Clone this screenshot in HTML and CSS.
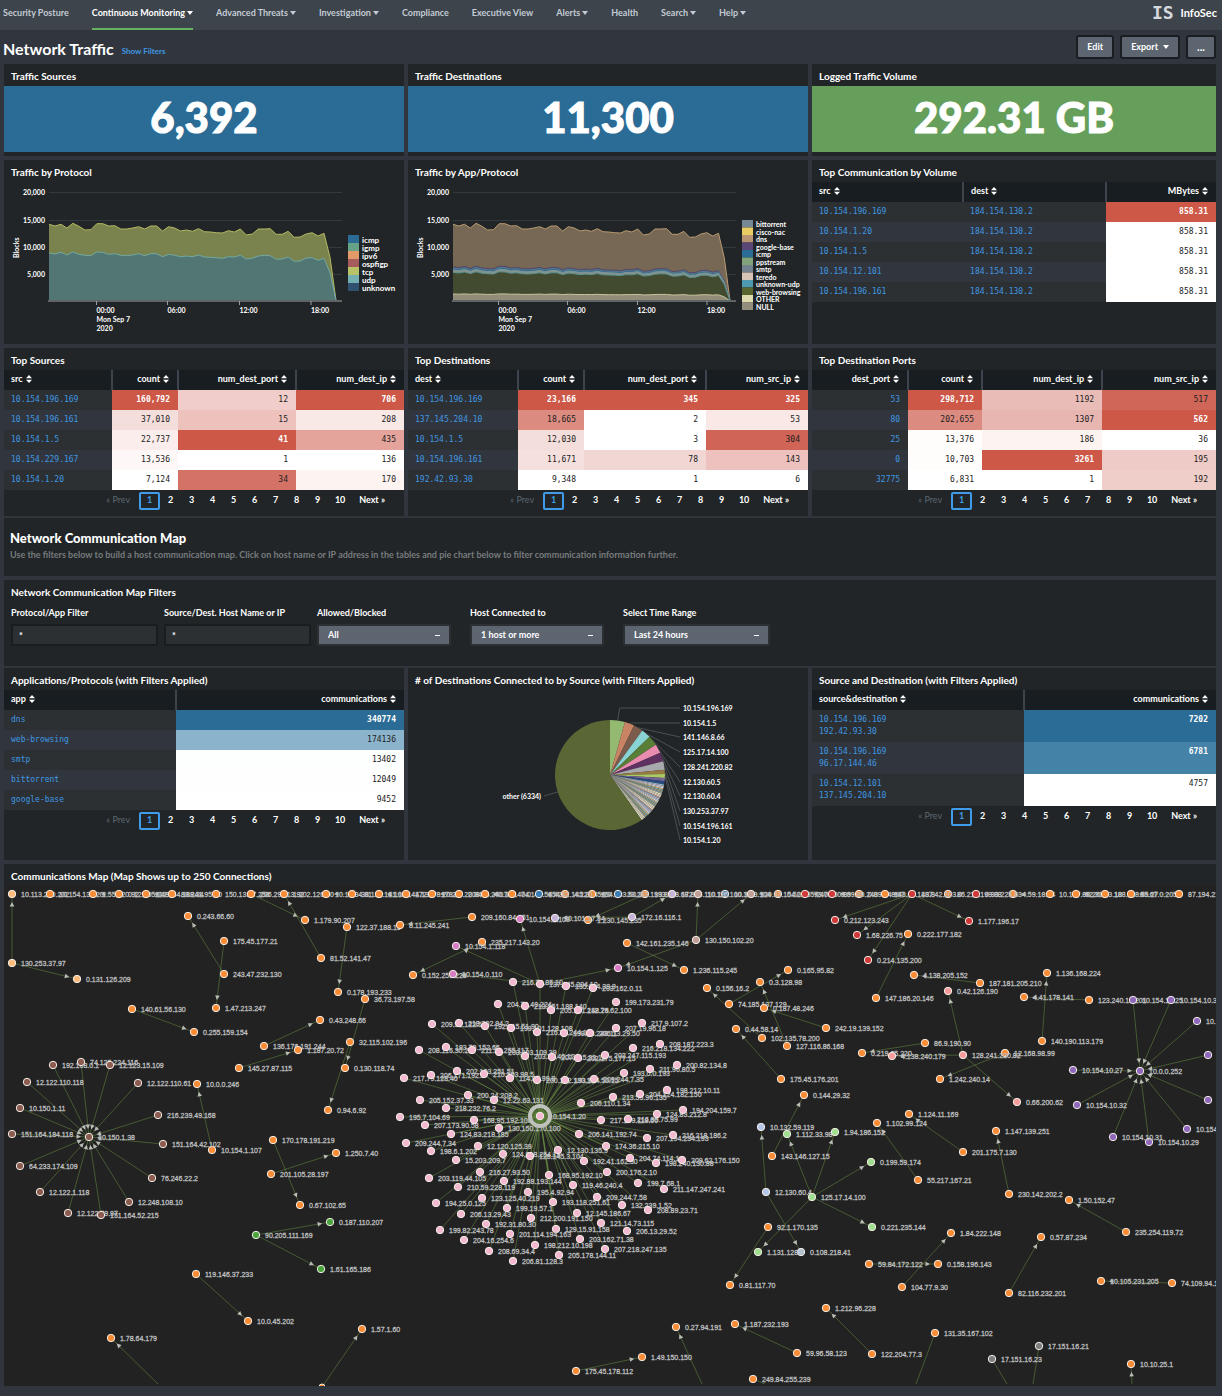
FILE: index.html
```html
<!DOCTYPE html>
<html lang="en">
<head>
<meta charset="utf-8">
<title>Network Traffic | InfoSec</title>
<link rel="stylesheet" href="styles.css">
</head>
<body>
<svg class="defs" width="0" height="0" aria-hidden="true">
  <symbol id="sort" viewBox="0 0 6 8"><path d="M0 3.2 3 0l3 3.2zM0 4.8h6L3 8z" fill="currentColor"/></symbol>
</svg>

<header class="topbar">
  <nav class="menu" aria-label="Main">
    <a href="#">Security Posture</a>
    <a href="#" class="active">Continuous Monitoring<i class="caret"></i></a>
    <a href="#">Advanced Threats<i class="caret"></i></a>
    <a href="#">Investigation<i class="caret"></i></a>
    <a href="#">Compliance</a>
    <a href="#">Executive View</a>
    <a href="#">Alerts<i class="caret"></i></a>
    <a href="#">Health</a>
    <a href="#">Search<i class="caret"></i></a>
    <a href="#">Help<i class="caret"></i></a>
  </nav>
  <div class="brand"><span class="logo">IS</span><span>InfoSec</span></div>
</header>

<main class="dashboard">
  <div class="page-head">
    <h1>Network Traffic</h1>
    <a href="#" class="show-filters">Show Filters</a>
    <div class="actions">
      <button type="button">Edit</button>
      <button type="button">Export<i class="caret"></i></button>
      <button type="button" class="more" aria-label="More actions">...</button>
    </div>
  </div>

  <div class="row">
    <section class="panel"><h2>Traffic Sources</h2><div class="single blue">6,392</div></section>
    <section class="panel"><h2>Traffic Destinations</h2><div class="single blue">11,300</div></section>
    <section class="panel"><h2>Logged Traffic Volume</h2><div class="single green">292.31 GB</div></section>
  </div>

  <div class="row charts">
    <section class="panel"><h2>Traffic by Protocol</h2><svg id="by-protocol" class="chart" viewBox="0 0 400 160"></svg></section>
    <section class="panel"><h2>Traffic by App/Protocol</h2><svg id="by-app" class="chart" viewBox="0 0 400 160"></svg></section>
    <section class="panel"><h2>Top Communication by Volume</h2>
      <table>
        <colgroup><col style="width:37.4%"><col style="width:35.4%"><col></colgroup>
        <thead><tr><th><button type="button">src<svg><use href="#sort"/></svg></button></th><th><button type="button">dest<svg><use href="#sort"/></svg></button></th><th class="num"><button type="button">MBytes<svg><use href="#sort"/></svg></button></th></tr></thead>
        <tbody>
          <tr><td><a href="#">10.154.196.169</a></td><td><a href="#">184.154.130.2</a></td><td class="num max" style="background:#cd5848">858.31</td></tr>
          <tr><td><a href="#">10.154.1.20</a></td><td><a href="#">184.154.130.2</a></td><td class="num" style="background:#fff">858.31</td></tr>
          <tr><td><a href="#">10.154.1.5</a></td><td><a href="#">184.154.130.2</a></td><td class="num" style="background:#fff">858.31</td></tr>
          <tr><td><a href="#">10.154.12.101</a></td><td><a href="#">184.154.130.2</a></td><td class="num" style="background:#fff">858.31</td></tr>
          <tr><td><a href="#">10.154.196.161</a></td><td><a href="#">184.154.130.2</a></td><td class="num" style="background:#fff">858.31</td></tr>
        </tbody>
      </table>
    </section>
  </div>

  <div class="row tops">
    <section class="panel"><h2>Top Sources</h2>
      <table>
        <colgroup><col style="width:27%"><col style="width:16.5%"><col style="width:29.5%"><col></colgroup>
        <thead><tr><th><button type="button">src<svg><use href="#sort"/></svg></button></th><th class="num"><button type="button">count<svg><use href="#sort"/></svg></button></th><th class="num"><button type="button">num_dest_port<svg><use href="#sort"/></svg></button></th><th class="num"><button type="button">num_dest_ip<svg><use href="#sort"/></svg></button></th></tr></thead>
        <tbody>
          <tr><td><a href="#">10.154.196.169</a></td><td class="num max" style="background:#cd5848">160,792</td><td class="num" style="background:#f0cdca">12</td><td class="num max" style="background:#cd5848">706</td></tr>
          <tr><td><a href="#">10.154.196.161</a></td><td class="num" style="background:#f4dedb">37,010</td><td class="num" style="background:#edc2bd">15</td><td class="num" style="background:#f8e8e6">208</td></tr>
          <tr><td><a href="#">10.154.1.5</a></td><td class="num" style="background:#faedeb">22,737</td><td class="num max" style="background:#cd5848">41</td><td class="num" style="background:#e4a49c">435</td></tr>
          <tr><td><a href="#">10.154.229.167</a></td><td class="num" style="background:#fdf7f7">13,536</td><td class="num" style="background:#fff">1</td><td class="num" style="background:#fff">136</td></tr>
          <tr><td><a href="#">10.154.1.20</a></td><td class="num" style="background:#fff">7,124</td><td class="num" style="background:#d47266">34</td><td class="num" style="background:#fdf3f1">170</td></tr>
        </tbody>
      </table>
      <nav class="pager" aria-label="Top Sources pages"><span class="off">« Prev</span><a href="#" class="cur">1</a><a href="#">2</a><a href="#">3</a><a href="#">4</a><a href="#">5</a><a href="#">6</a><a href="#">7</a><a href="#">8</a><a href="#">9</a><a href="#" class="two">10</a><a href="#" class="next">Next »</a></nav>
    </section>
    <section class="panel"><h2>Top Destinations</h2>
      <table>
        <colgroup><col style="width:27.5%"><col style="width:16.5%"><col style="width:30.5%"><col></colgroup>
        <thead><tr><th><button type="button">dest<svg><use href="#sort"/></svg></button></th><th class="num"><button type="button">count<svg><use href="#sort"/></svg></button></th><th class="num"><button type="button">num_dest_port<svg><use href="#sort"/></svg></button></th><th class="num"><button type="button">num_src_ip<svg><use href="#sort"/></svg></button></th></tr></thead>
        <tbody>
          <tr><td><a href="#">10.154.196.169</a></td><td class="num max" style="background:#cd5848">23,166</td><td class="num max" style="background:#cd5848">345</td><td class="num max" style="background:#cd5848">325</td></tr>
          <tr><td><a href="#">137.145.204.10</a></td><td class="num" style="background:#dc8b81">18,665</td><td class="num" style="background:#fff">2</td><td class="num" style="background:#f9e8e6">53</td></tr>
          <tr><td><a href="#">10.154.1.5</a></td><td class="num" style="background:#f4dedb">12,030</td><td class="num" style="background:#fff">3</td><td class="num" style="background:#d06456">304</td></tr>
          <tr><td><a href="#">10.154.196.161</a></td><td class="num" style="background:#f5e0de">11,671</td><td class="num" style="background:#f2d6d3">78</td><td class="num" style="background:#edc2be">143</td></tr>
          <tr><td><a href="#">192.42.93.30</a></td><td class="num" style="background:#fff">9,348</td><td class="num" style="background:#fff">1</td><td class="num" style="background:#fff">6</td></tr>
        </tbody>
      </table>
      <nav class="pager" aria-label="Top Destinations pages"><span class="off">« Prev</span><a href="#" class="cur">1</a><a href="#">2</a><a href="#">3</a><a href="#">4</a><a href="#">5</a><a href="#">6</a><a href="#">7</a><a href="#">8</a><a href="#">9</a><a href="#" class="two">10</a><a href="#" class="next">Next »</a></nav>
    </section>
    <section class="panel"><h2>Top Destination Ports</h2>
      <table>
        <colgroup><col style="width:23.8%"><col style="width:18.3%"><col style="width:29.7%"><col></colgroup>
        <thead><tr><th class="num"><button type="button">dest_port<svg><use href="#sort"/></svg></button></th><th class="num"><button type="button">count<svg><use href="#sort"/></svg></button></th><th class="num"><button type="button">num_dest_ip<svg><use href="#sort"/></svg></button></th><th class="num"><button type="button">num_src_ip<svg><use href="#sort"/></svg></button></th></tr></thead>
        <tbody>
          <tr><td class="num"><a href="#">53</a></td><td class="num max" style="background:#cd5848">298,712</td><td class="num" style="background:#e9bcb8">1192</td><td class="num" style="background:#d06658">517</td></tr>
          <tr><td class="num"><a href="#">80</a></td><td class="num" style="background:#dc8b81">202,655</td><td class="num" style="background:#e8b6b1">1307</td><td class="num max" style="background:#cd5848">562</td></tr>
          <tr><td class="num"><a href="#">25</a></td><td class="num" style="background:#fffcfc">13,376</td><td class="num" style="background:#fdf3f1">186</td><td class="num" style="background:#fff">36</td></tr>
          <tr><td class="num"><a href="#">0</a></td><td class="num" style="background:#fffdfc">10,703</td><td class="num max" style="background:#cd5848">3261</td><td class="num" style="background:#eecbc7">195</td></tr>
          <tr><td class="num"><a href="#">32775</a></td><td class="num" style="background:#fff">6,831</td><td class="num" style="background:#fff">1</td><td class="num" style="background:#efcdc9">192</td></tr>
        </tbody>
      </table>
      <nav class="pager" aria-label="Top Destination Ports pages"><span class="off">« Prev</span><a href="#" class="cur">1</a><a href="#">2</a><a href="#">3</a><a href="#">4</a><a href="#">5</a><a href="#">6</a><a href="#">7</a><a href="#">8</a><a href="#">9</a><a href="#" class="two">10</a><a href="#" class="next">Next »</a></nav>
    </section>
  </div>

  <section class="panel intro">
    <h2>Network Communication Map</h2>
    <p>Use the filters below to build a host communication map. Click on host name or IP address in the tables and pie chart below to filter communication information further.</p>
  </section>

  <section class="panel filters">
    <h2>Network Communication Map Filters</h2>
    <form class="fields">
      <div class="field"><label for="f-app">Protocol/App Filter</label><input id="f-app" type="text" value="*"></div>
      <div class="field"><label for="f-host">Source/Dest. Host Name or IP</label><input id="f-host" type="text" value="*"></div>
      <div class="field"><label for="f-act">Allowed/Blocked</label><select id="f-act"><option>All</option></select></div>
      <div class="field"><label for="f-cnt">Host Connected to</label><select id="f-cnt"><option>1 host or more</option></select></div>
      <div class="field wide"><label for="f-time">Select Time Range</label><select id="f-time"><option>Last 24 hours</option></select></div>
    </form>
  </section>

  <div class="row details">
    <section class="panel"><h2>Applications/Protocols (with Filters Applied)</h2>
      <table>
        <colgroup><col style="width:43%"><col></colgroup>
        <thead><tr><th><button type="button">app<svg><use href="#sort"/></svg></button></th><th class="num"><button type="button">communications<svg><use href="#sort"/></svg></button></th></tr></thead>
        <tbody>
          <tr><td><a href="#">dns</a></td><td class="num max" style="background:#2b6c97">340774</td></tr>
          <tr><td><a href="#">web-browsing</a></td><td class="num" style="background:#8bb3cc">174136</td></tr>
          <tr><td><a href="#">smtp</a></td><td class="num" style="background:#fdfefe">13402</td></tr>
          <tr><td><a href="#">bittorrent</a></td><td class="num" style="background:#fefefe">12049</td></tr>
          <tr><td><a href="#">google-base</a></td><td class="num" style="background:#fff">9452</td></tr>
        </tbody>
      </table>
      <nav class="pager" aria-label="Applications pages"><span class="off">« Prev</span><a href="#" class="cur">1</a><a href="#">2</a><a href="#">3</a><a href="#">4</a><a href="#">5</a><a href="#">6</a><a href="#">7</a><a href="#">8</a><a href="#">9</a><a href="#" class="two">10</a><a href="#" class="next">Next »</a></nav>
    </section>
    <section class="panel"><h2># of Destinations Connected to by Source (with Filters Applied)</h2><svg id="by-source" class="chart" viewBox="0 0 400 168"></svg></section>
    <section class="panel"><h2>Source and Destination (with Filters Applied)</h2>
      <table>
        <colgroup><col style="width:52.5%"><col></colgroup>
        <thead><tr><th><button type="button">source&amp;destination<svg><use href="#sort"/></svg></button></th><th class="num"><button type="button">communications<svg><use href="#sort"/></svg></button></th></tr></thead>
        <tbody class="pairs">
          <tr><td><a href="#">10.154.196.169<br>192.42.93.30</a></td><td class="num max" style="background:#2b6c97">7202</td></tr>
          <tr><td><a href="#">10.154.196.169<br>96.17.144.46</a></td><td class="num max" style="background:#4482a8">6781</td></tr>
          <tr><td><a href="#">10.154.12.101<br>137.145.204.10</a></td><td class="num" style="background:#fff">4757</td></tr>
        </tbody>
      </table>
      <nav class="pager" aria-label="Source and Destination pages"><span class="off">« Prev</span><a href="#" class="cur">1</a><a href="#">2</a><a href="#">3</a><a href="#">4</a><a href="#">5</a><a href="#">6</a><a href="#">7</a><a href="#">8</a><a href="#">9</a><a href="#" class="two">10</a><a href="#" class="next">Next »</a></nav>
    </section>
  </div>

  <section class="panel"><h2>Communications Map (Map Shows up to 250 Connections)</h2>
    <svg id="map" class="map" viewBox="4 886 1212 500"></svg>
  </section>
</main>
<script src="app.js"></script>
</body>
</html>
```
FILE: styles.css
```css
* { box-sizing: border-box; }
body {
  margin: 0;
  background: #31363e;
  color: #fff;
  font: 10px/12px Lato, "Liberation Sans", sans-serif;
}
a { color: #3f97e2; text-decoration: none; }
h1, h2, p { margin: 0; }
button { font: inherit; color: inherit; }
.defs { position: absolute; }

.caret {
  display: inline-block;
  margin-left: 2px;
  border: 3px solid transparent;
  border-top: 4px solid currentColor;
  border-bottom: 0;
  vertical-align: 1px;
}

/* Top bar */
.topbar {
  display: flex;
  justify-content: space-between;
  height: 30px;
  padding: 0 5px 0 3px;
  background: #3d444c;
}
.menu { display: flex; gap: 23px; font-size: 9px; font-weight: 700; }
.menu a { padding-top: 7px; color: #c3cbd4; border-bottom: 2px solid transparent; white-space: nowrap; }
.menu .active { color: #fff; border-color: #65b35f; }
.brand { display: flex; gap: 7px; height: 26px; align-items: center; font-size: 11px; font-weight: 700; }
.logo { font: 700 18px/18px "DejaVu Sans Mono", monospace; color: #d5d9dd; }

/* Dashboard frame */
.dashboard { padding: 0 6px 10px 4px; }
.page-head { display: flex; align-items: center; gap: 8px; height: 34px; }
.page-head h1 { margin-left: -1px; font-size: 16px; line-height: 20px; padding-top: 3px; }
.show-filters { font-size: 8px; font-weight: 700; padding-top: 8px; }
.actions { display: flex; gap: 6px; margin-left: auto; }
.actions button {
  height: 24px;
  padding: 0 9px;
  border: 2px solid #1a1e22;
  border-radius: 3px;
  background: #5c6570;
  font-size: 9px;
  font-weight: 700;
}
.actions .more { width: 30px; font-size: 11px; }
.actions .caret { margin-left: 5px; }
.row { display: grid; grid-template-columns: minmax(0, 100fr) minmax(0, 100fr) minmax(0, 101fr); gap: 4px; margin-bottom: 4px; }
.panel { background: #212527; }
.panel h2 { height: 22px; padding: 6px 7px 0; font-size: 10px; line-height: 13px; font-weight: 700; white-space: nowrap; }
.tops { margin-bottom: 2px; }
.charts { min-height: 184px; }
.details { min-height: 192px; }
.chart, .map { display: block; width: 100%; height: auto; }

.single {
  height: 66px;
  margin-bottom: 4px;
  font-size: 42px;
  line-height: 62px;
  font-weight: 900;
  text-align: center;
  -webkit-text-stroke: 1px #fff;
}
.blue { background: #2b6c97; }
.green { background: #669f5c; }

/* Tables */
table { width: 100%; table-layout: fixed; border-collapse: collapse; }
th { height: 20px; padding: 0 7px 3px; background: #171d21; text-align: left; }
th + th { border-left: 2px solid #3c444d; }
th button { padding: 0; border: 0; background: none; font-size: 9px; font-weight: 700; }
th svg { width: 6px; height: 8px; margin-left: 3px; vertical-align: -1px; }
td { height: 20px; padding: 0 7px 1px; font: 8px/12px "DejaVu Sans Mono", monospace; }
tbody tr:nth-child(odd) { background: #2c3033; }
tbody tr:nth-child(even) { background: #31363e; }
.num { padding-right: 8px; text-align: right; }
td.num { color: #222; }
td.max { color: #fff; font-weight: 700; }
.pairs td { height: 32px; padding-top: 4px; padding-bottom: 4px; vertical-align: top; }

.pager { display: flex; justify-content: flex-end; height: 26px; padding: 2px 17px 0 0; font-size: 9px; font-weight: 700; line-height: 11px; }
.pager a { width: 21px; height: 18px; border: 2px solid transparent; color: #fff; text-align: center; }
.pager .cur { border-color: #409be8; border-radius: 2px; color: #409be8; }
.pager .two { width: 24px; }
.pager .next { width: auto; margin-left: 5px; }
.pager .off { margin-right: 9px; padding-top: 2px; color: #5c6570; font-weight: 400; }

/* Map introduction and filters */
.intro { height: 58px; margin-bottom: 4px; padding: 12px 6px 0; }
.intro h2 { height: 19px; padding: 0; font-size: 13px; line-height: 16px; font-weight: 900; }
.intro p { color: #777b7e; font-size: 9px; font-weight: 700; }
.filters { height: 86px; margin-bottom: 2px; }
.fields { display: flex; flex-wrap: wrap; gap: 6px; padding: 5px 7px; }
.field { width: 147px; font-weight: 700; font-size: 9px; }
.field label { display: block; height: 17px; white-space: nowrap; }
.field input, .field select { height: 22px; border: 2px solid #1a1d20; border-radius: 2px; color: #fff; font: 700 9px/12px Lato, sans-serif; }
.field input { width: 100%; padding: 0 6px; background: #2c3033; }
.field select {
  width: 134px;
  padding: 0 9px;
  appearance: none;
  border-color: #2c3033;
  background: linear-gradient(#fff, #fff) right 9px center / 5px 1px no-repeat #5c6570;
}
.field.wide select { width: 100%; }

/* SVG drawings */
.chart text { fill: #fff; font-size: 7px; font-weight: 700; }
.chart .legend-lg { font-size: 8px; }
.chart .grid { stroke: #303a3f; }
.chart .axis { stroke: #5f6467; stroke-width: 2; }
.chart .tick { stroke: #9a9ea2; }
.chart .leader { fill: none; stroke: #4c5053; }
.map { background: #222; }
.map line { stroke: #6a9244; stroke-opacity: .5; }
.map .arrow { fill: #b9bdb5; }
.map circle { stroke: #f4eee8; }
.map .halo { fill: none; stroke: #bfc3bb; stroke-width: 4; }
.map text { fill: #bcbebf; font: 7px "Liberation Sans", sans-serif; stroke: #bcbebf; stroke-width: .3; }
```
FILE: app.js
```js
const NS = 'http://www.w3.org/2000/svg';
function add(parent, name, attrs, text) {
  const el = document.createElementNS(NS, name);
  for (const key in attrs) el.setAttribute(key, attrs[key]);
  if (text !== undefined) el.textContent = text;
  parent.appendChild(el);
  return el;
}

/* ---- Area charts: values are heights above the baseline, in thirds of a unit ---- */
const total = [205,210,205,216,202,211,222,221,203,203,210,209,219,219,216,212,219,210,210,225,212,216,225,222,226,218,227,228,230,231,224,228,219,237,234,219,219,218,235,235,226,244,243,234,230,240,232,304,433].map(v => (435 - v) / 3);
const udp = [291,294,289,297,288,295,298,299,288,289,295,293,298,299,297,293,299,293,293,302,295,298,302,300,302,297,303,304,305,307,302,303,298,309,307,300,298,299,310,309,303,316,315,306,305,313,307,350,433].map(v => (435 - v) / 3);
const BASE = 119;

function areaChart(id, right, plotRight, layers, ticks, legend) {
  const svg = document.getElementById(id);
  [['20,000', 10], ['15,000', 38], ['10,000', 65], ['5,000', 92]].forEach(([label, y]) => {
    add(svg, 'line', { class: 'grid', x1: 45, x2: plotRight, y1: y + .5, y2: y + .5 });
    add(svg, 'text', { x: 41, y: y + 3, 'text-anchor': 'end' }, label);
  });
  layers.forEach(([values, fill, line, ratio]) => {
    const pts = values.map((v, i) => (45 + i * (right - 45) / 48).toFixed(1) + ',' + (BASE - v * ratio).toFixed(1));
    add(svg, 'polygon', { points: `45,${BASE} ${pts.join(' ')} ${right},${BASE}`, fill });
    add(svg, 'polyline', { points: pts.join(' '), fill: 'none', stroke: line });
  });
  add(svg, 'line', { class: 'axis', x1: 44, x2: plotRight, y1: BASE, y2: BASE });
  ticks.forEach(([label, x]) => {
    add(svg, 'line', { class: 'tick', x1: x, x2: x, y1: BASE, y2: BASE + 4 });
    add(svg, 'text', { x: x, y: 131 }, label);
  });
  add(svg, 'text', { x: ticks[0][1], y: 140 }, 'Mon Sep 7');
  add(svg, 'text', { x: ticks[0][1], y: 149 }, '2020');
  add(svg, 'text', { transform: 'translate(15 76) rotate(-90)' }, 'Blocks');
  legend.items.forEach(([name, color], i) => {
    const y = legend.y + i * legend.step;
    add(svg, 'rect', { x: legend.x, y, width: 11, height: legend.step, fill: color });
    add(svg, 'text', { x: legend.x + 14, y: y + legend.base, class: legend.cls }, name);
  });
}

areaChart('by-protocol', 332, 338, [
  [total, '#7a824d', '#b5b963', 1],
  [udp, '#527674', '#71a9a2', 1],
  [udp, '#38526a', '#38526a', .01]
], [['00:00', 92.5], ['06:00', 163.5], ['12:00', 235.5], ['18:00', 307]], {
  x: 344, y: 53, step: 8, base: 8, cls: 'legend-lg',
  items: [['icmp', '#2b6c97'], ['igmp', '#65a288'], ['ipv6', '#e19a68'], ['ospfigp', '#a65c5c'], ['tcp', '#b8c267'], ['udp', '#74b0b1'], ['unknown', '#30506f']]
});

areaChart('by-app', 322, 328, [
  [total, '#776856', '#b99b70', 1],
  [udp, '#4b4767', '#554a6b', .71],
  [udp, '#316c91', '#5a7a90', .685],
  [udp, '#87938c', '#7d9796', .645],
  [udp, '#424b30', '#59908f', .595],
  [udp, '#918c78', '#c9c39c', .145]
], [['00:00', 90.5], ['06:00', 159.5], ['12:00', 229.5], ['18:00', 299]], {
  x: 334, y: 38, step: 7.5, base: 7, cls: 'legend-sm',
  items: [['bittorrent', '#768894'], ['cisco-nac', '#eacc62'], ['dns', '#b89674'], ['google-base', '#5b4775'], ['icmp', '#2b6c97'], ['ppstream', '#82a37a'], ['smtp', '#73838e'], ['teredo', '#d6c5b7'], ['unknown-udp', '#4e99b0'], ['web-browsing', '#59662f'], ['OTHER', '#dfdbb0'], ['NULL', '#938e7d']]
});

/* ---- Pie chart ---- */
(function pie() {
  const svg = document.getElementById('by-source');
  const cx = 202, cy = 85, r = 55;
  const at = deg => [cx + r * Math.sin(deg * Math.PI / 180), cy - r * Math.cos(deg * Math.PI / 180)];
  const slices = [[15.8, '#94ba72'], [26, '#c98365'], [36, '#7b5b4c'], [46, '#8ad3d5'], [56.5, '#587e37'], [66, '#ea8caf'], [75.5, '#5f3160'], [84.5, '#a8a9ad'], [89, '#977a43'], [93, '#acc963'], [96.5, '#76639a'], [100, '#2a4c80']];
  const thin = ['#8fb7c9', '#d9c8b4', '#9a9d78', '#c9d6da', '#b78c86', '#e1ddb6', '#7da7a8', '#c3b3c8', '#dfe3d2', '#8e9aa3', '#d4ad7c'];
  for (let i = 0; i < 32; i++) slices.push([100 + (i + 1) * 1.4, thin[i * 7 % 11]]);
  slices.push([360, '#5a6735']);
  let from = 0;
  slices.forEach(([to, fill]) => {
    const a = at(from), b = at(to);
    add(svg, 'path', { d: `M${cx} ${cy}L${a}A${r} ${r} 0 ${to - from > 180 ? 1 : 0} 1 ${b}Z`, fill });
    from = to;
  });
  const names = ['10.154.196.169', '10.154.1.5', '141.146.8.66', '125.17.14.100', '128.241.220.82', '12.130.60.5', '12.130.60.4', '130.253.37.97', '10.154.196.161', '10.154.1.20'];
  const mids = [8, 21, 31, 41, 51, 61, 71, 80, 87, 91];
  names.forEach((name, i) => {
    const y = Math.round(18 + i * 14.7), p = at(mids[i]);
    const knee = i < 2 ? `${p[0] + 2},${y} ` : '';
    add(svg, 'polyline', { class: 'leader', points: `${p} ${knee}272,${y}` });
    add(svg, 'text', { x: 275, y: y + 3 }, name);
  });
  add(svg, 'polyline', { class: 'leader', points: `${at(252)} 136,106` });
  add(svg, 'text', { x: 133, y: 109, 'text-anchor': 'end' }, 'other (6334)');
})();

/* ---- Communications map ---- */
const color = { O: '#f98c35', L: '#fdbc7c', B: '#8c5c50', G: '#4aa53c', P: '#f3b9d1', M: '#d77cc4', U: '#3a7db5', u: '#b4c7e6', V: '#9068bb', v: '#c5b4d8', g: '#a0de90', R: '#d0393a', S: '#f79c9c', K: '#7f7f7f', T: '#c19f98' };
/* group: x y label ; ... */
const groups = {
  L: '12 894 10.113.200.202;12 963 130.253.37.97;77 979 0.131.126.209',
  O: '50 894 10.154.130.20;93 894 1.55.220.92;119 894 0.121.95.248;146 894 222.154.188.34;172 894 88.241.95.40;216 894 150.133.7.258;251 894 206.29.113.92;284 894 1.202.126.40;326 894 10.18.34.81;352 894 38.132.141.138;379 894 1.108.144.138;406 894 172.178.20.24;432 894 178.87.20.84;459 894 208.44.240.14;485 894 40.74.140.0;512 894 74.147.54.42;565 894 4.22.145.20;592 894 204.133.50.13;645 894 193.118.68.86;778 894 0.52.155.240;859 894 0.89.248.97;885 894 143.18.143.8;948 894 86.212.199.88;1013 894 4.59.18.34;1050 894 10.147.80.26;1076 894 82.31.43.18;1105 894 188.118.55.27;1131 894 83.67.0.205;1179 894 87.194.216.51;188 916 0.243.66.60;224 941 175.45.177.21;224 974 243.47.232.130;216 1008 1.47.213.247;132 1009 140.61.56.130;194 1032 0.255.159.154;305 920 1.179.90.207;347 927 122.37.188.15;321 958 81.52.141.47;338 992 0.178.193.233;365 999 36.73.197.58;320 1020 0.43.248.66;350 1042 32.115.102.196;264 1046 136.176.191.244;298 1050 1.187.20.72;239 1068 145.27.87.115;345 1068 0.130.118.74;197 1084 10.0.0.246;328 1110 0.94.6.92;212 1150 10.154.1.107;273 1140 170.178.191.219;300 1205 0.67.102.65;271 1174 201.105.28.197;336 1153 1.250.7.40;196 1274 119.146.37.233;248 1321 10.0.45.202;111 1338 1.78.64.179;362 1329 1.57.1.60;472 917 209.160.84.151;400 925 8.11.245.241;588 920 1.230.145.235;482 942 235.217.143.20;413 975 0.152.253.223;627 943 142.161.235.146;684 970 1.236.115.245;707 988 0.156.16.2;762 1038 102.135.78.200;729 1004 74.185.137.129;788 970 0.165.95.82;760 982 0.3.128.98;787 1046 127.116.86.168;764 1008 0.187.48.246;826 1028 242.19.139.152;736 1029 0.44.58.14;781 1079 175.45.176.201;730 1285 0.81.117.70;768 1227 92.1.170.135;676 1327 0.27.94.191;735 1324 1.187.232.193;797 1353 59.96.58.123;576 1371 175.45.178.112;642 1357 1.49.150.150;753 1379 249.84.255.239;772 1156 143.146.127.15;804 1095 0.144.29.32;908 934 0.222.177.182;876 998 147.186.20.146;914 975 4.138.205.152;980 983 187.181.205.210;1024 997 4.41.178.141;1089 1000 123.240.13.201;1047 973 1.136.168.224;1042 1041 140.190.113.179;862 1053 0.219.65.220;925 1043 86.9.190.90;1005 1053 12.168.98.99;940 1079 1.242.240.14;909 1114 1.124.11.169;963 1152 201.175.7.130;877 1123 1.102.99.124;918 1180 55.217.167.21;996 1131 1.147.139.251;1009 1194 230.142.202.2;1069 1200 1.50.152.47;1126 1232 235.254.119.72;951 1233 1.84.222.148;902 1287 104.77.9.30;1041 1237 0.57.87.234;1009 1293 82.116.232.201;869 1264 59.84.172.122;938 1264 0.158.196.143;1101 1281 10.105.231.205;1172 1283 74.109.94.17;826 1308 1.212.96.228;872 1354 122.204.77.3;935 1333 131.35.167.102;1131 1364 10.10.25.1',
  B: '53 1065 192.168.0.1;81 1062 74.125.224.116;110 1065 12.123.15.109;27 1082 12.122.110.118;138 1083 12.122.110.61;20 1108 10.150.1.11;158 1115 216.239.49.168;12 1134 151.164.184.118;163 1144 151.164.42.102;20 1166 64.233.174.109;152 1178 76.246.22.2;40 1192 12.122.1.118;129 1202 12.248.108.10;68 1213 12.122.79.97;101 1215 151.164.52.215;89 1137 10.150.1.38',
  G: '256 1235 90.205.111.169;330 1222 0.187.110.207;321 1269 1.61.165.186',
  M: '520 919 10.154.1.109;456 946 10.154.1.118;453 974 10.154.0.110;618 968 10.154.1.125',
  U: '539 894 154.42.145.20;618 894 33.253.193.8;725 894 10.10.3.104',
  v: '555 918 10.101.17.54;632 917 172.16.116.1;672 894 172.16.110.13',
  T: '698 894 10.116.100.3;751 894 129.33.154.0;696 940 130.150.102.20',
  u: '761 1127 10.132.59.119;766 1192 12.130.60.4;801 1252 0.108.218.41',
  g: '758 1252 1.131.128.5;812 1197 125.17.14.100;787 1134 1.112.33.98;835 1132 1.94.186.152;871 1162 0.199.59.174;872 1227 0.221.235.144',
  R: '805 894 73.70.60.89;832 894 0.69.89.248;912 894 187.42.203.0;976 894 0.93.225.63;835 920 0.212.123.243;857 935 1.68.226.75;868 960 0.214.135.200;969 921 1.177.196.17',
  S: '948 991 0.42.126.190;963 1055 128.241.220.82;892 1056 4.138.240.179;1017 1102 0.66.200.62',
  K: '992 1359 17.151.16.23;1039 1346 17.151.16.21',
  V: '1133 1000 10.154.10.25;1171 1000 10.154.10.30;1197 1021 10.154.10.26;1208 1055 10.154.10.33;1208 1100 10.154.10.34;1187 1129 10.154.10.28;1149 1142 10.154.10.29;1113 1137 10.154.10.31;1077 1105 10.154.10.32;1073 1070 10.154.10.27;1140 1071 10.0.0.252',
  P: '513 982 216.79.85.10;540 984 137.145.204.10;566 986 195.194.39.9;593 988 203.162.0.11;498 1004 204.79.49.224;525 1006 213.151.188.140;551 1010 205.161.148.26;578 1010 212.79.62.100;616 1002 199.173.231.79;432 1024 209.51.122.5;459 1023 218.202.94.2;485 1026 192.215.51.90;511 1028 199.101.128.108;537 1032 216.33.244.11;564 1033 199.18.248.11;590 1033 206.13.29.50;616 1028 207.19.96.18;642 1023 217.9.107.2;419 1050 208.116.30.21;446 1047 193.79.152.66;472 1050 211.50.255.117;499 1052 203.203.109.39;525 1056 203.33.40.12;552 1057 207.215.33.12;578 1058 202.175.177.15;605 1055 202.247.115.193;633 1048 216.218.134.222;660 1044 208.187.223.3;404 1078 217.79.128.40;431 1075 206.171.192.9;457 1071 202.103.251.51;484 1074 210.103.98.5;510 1078 114.87.99.8;537 1080 200.152.130.10;565 1080 193.124.50.15;594 1079 209.244.7.35;624 1073 193.0.0.193;650 1069 211.96.80.5;677 1065 200.82.134.8;420 1100 205.152.37.33;468 1095 200.24.208.2;494 1100 12.22.63.131;581 1103 206.110.1.34;613 1097 213.55.96.135;640 1094 204.124.182.150;667 1090 198.212.10.11;446 1108 218.232.76.2;400 1117 195.7.104.69;425 1125 207.173.90.58;474 1120 168.95.192.106;499 1128 130.150.170.100;451 1134 124.83.218.185;406 1143 209.244.7.34;431 1151 198.6.1.202;478 1146 12.120.125.39;503 1154 124.218.254.18;456 1160 15.203.209.7;530 1156 128.145.3.104;558 1150 12.130.135.9;579 1134 206.141.192.74;601 1120 217.109.118.60;628 1119 216.99.75.99;657 1114 124.83.212.8;683 1110 194.204.159.7;647 1138 207.194.234.193;673 1135 216.218.186.2;606 1146 174.36.215.10;584 1161 192.41.162.30;630 1158 204.74.114.1;656 1163 198.240.130.88;682 1160 209.62.176.150;480 1172 216.27.93.50;429 1178 203.119.44.105;504 1181 192.88.193.144;549 1175 168.95.192.10;607 1172 200.176.2.10;638 1183 199.7.68.1;664 1189 211.147.247.241;573 1185 119.46.240.4;458 1187 210.59.228.119;528 1192 195.4.92.94;482 1198 123.125.40.219;436 1203 194.25.0.125;553 1202 193.118.251.61;597 1197 209.244.7.58;622 1205 132.239.1.52;648 1210 208.89.23.71;507 1208 199.19.57.1;461 1214 206.13.29.43;531 1218 212.200.191.150;577 1213 12.145.186.67;601 1223 121.14.73.115;486 1224 192.31.80.30;440 1230 199.82.243.78;556 1229 129.15.91.158;627 1231 206.13.29.52;510 1234 201.114.194.163;580 1239 203.162.71.38;464 1240 204.16.254.6;535 1245 198.212.10.198;605 1249 207.218.247.135;489 1251 208.69.34.4;559 1255 205.178.144.11;513 1261 206.81.128.3;540 1116 10.154.1.20'
};
/* directed connections: x1 y1 x2 y2 */
const links = '12 963 12 894;12 963 77 979;224 974 188 916;224 941 216 1008;132 1009 194 1032;251 894 305 920;321 958 284 894;347 927 338 992;365 999 345 1068;350 1042 328 1110;264 1046 320 1020;239 1068 298 1050;212 1150 197 1084;273 1140 300 1205;271 1174 336 1153;256 1235 330 1222;256 1235 321 1269;196 1274 248 1321;158 1384 111 1338;322 1387 362 1329;472 917 400 925;632 917 672 894;632 917 555 918;645 894 588 920;482 942 413 975;540 984 456 946;540 984 520 919;540 984 453 974;540 984 618 968;696 940 698 894;696 940 751 894;696 940 618 968;627 943 684 970;762 1038 707 988;729 1004 788 970;787 1046 760 982;826 1028 764 1008;781 1079 736 1029;768 1227 730 1285;702 1384 676 1327;797 1353 735 1324;576 1371 642 1357;766 1192 761 1127;766 1192 801 1252;772 1156 804 1095;812 1197 787 1134;812 1197 835 1132;812 1197 871 1162;812 1197 872 1227;812 1197 758 1252;912 894 835 920;912 894 857 935;912 894 868 960;912 894 969 921;876 998 908 934;980 983 914 975;963 1055 948 991;963 1055 892 1056;963 1055 1017 1102;1089 1000 1024 997;1042 1041 1047 973;925 1043 862 1053;1005 1053 940 1079;963 1152 909 1114;918 1180 877 1123;1009 1194 996 1131;1126 1232 1069 1200;902 1287 951 1233;1009 1293 1041 1237;869 1264 938 1264;1172 1283 1101 1281;872 1354 826 1308;1132 1384 1131 1364;119 894 93 894;172 894 146 894;352 894 326 894;406 894 379 894;459 894 432 894;512 894 485 894;565 894 539 894;618 894 592 894;778 894 751 894;832 894 805 894;859 894 832 894;912 894 885 894;1050 894 1013 894;1105 894 1076 894;1179 894 1131 894';
/* connections that run past the lower edge of the map */
const openLinks = '935 1333 916 1384;992 1359 1007 1384;1039 1346 1033 1384;753 1379 765 1384';

(function map() {
  const svg = document.getElementById('map');
  const rows = s => s.split(';').map(t => t.split(' '));
  const arrow = (x1, y1, x2, y2) => {
    const a = Math.atan2(y2 - y1, x2 - x1) * 180 / Math.PI;
    add(svg, 'path', { class: 'arrow', d: 'M-12.5-2.3L-8 0L-12.5 2.3Z', transform: `translate(${x2} ${y2}) rotate(${a.toFixed(1)})` });
  };
  const link = (x1, y1, x2, y2, head) => {
    add(svg, 'line', { x1, y1, x2, y2 });
    if (head) arrow(x1, y1, x2, y2);
  };
  rows(links).forEach(l => link(...l, true));
  rows(openLinks).forEach(l => link(...l, false));
  ['B', 'V', 'P'].forEach(key => {
    const nodes = rows(groups[key]);
    const hub = nodes[nodes.length - 1];
    nodes.slice(0, -1).forEach(n => link(n[0], n[1], hub[0], hub[1], key !== 'P'));
  });
  add(svg, 'circle', { class: 'halo', cx: 540, cy: 1116, r: 10 });
  add(svg, 'circle', { cx: 322, cy: 1387, r: 3, fill: color.O });
  for (const key in groups) {
    rows(groups[key]).forEach(([x, y, label]) => {
      add(svg, 'circle', { cx: x, cy: y, r: 3.7, fill: color[key] });
      add(svg, 'text', { x: +x + 9, y: +y + 3 }, label);
    });
  }
})();
```
